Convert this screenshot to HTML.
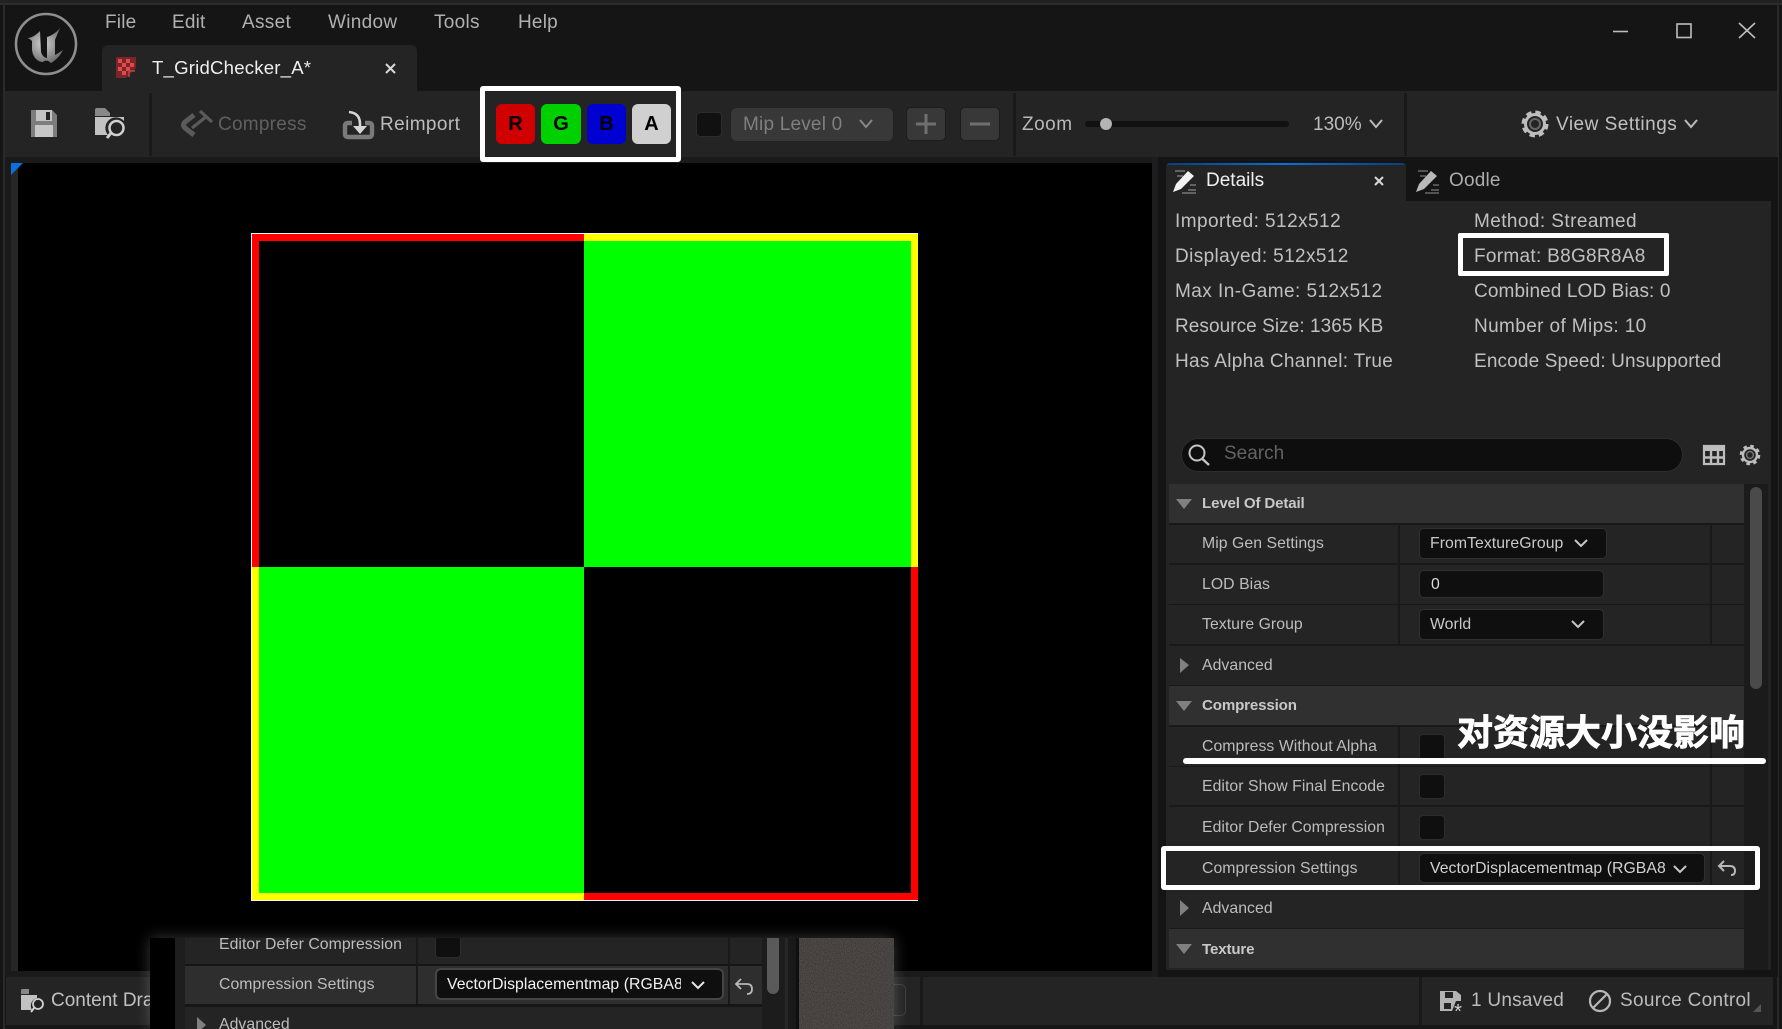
<!DOCTYPE html>
<html><head><meta charset="utf-8"><title>T_GridChecker_A</title>
<style>
html,body{margin:0;padding:0;width:1782px;height:1029px;overflow:hidden;background:#151515}
*{box-sizing:border-box}
body{position:relative;font-family:"Liberation Sans","Noto Sans CJK SC",sans-serif;}
.b{position:absolute}
.t{position:absolute;white-space:nowrap;height:24px;line-height:24px;font-size:19px;color:#c0c0c0;margin-top:1px}
.r{font-size:15.8px;color:#bdbdbd;letter-spacing:.05px}
.h{font-size:15.1px;color:#c8c8c8;font-weight:bold;letter-spacing:-.15px}
.ctl{position:absolute;background:#0f0f0f;border:1px solid #2f2f2f;border-radius:5px}
.cb{position:absolute;width:26px;background:#0f0f0f;border:1px solid #2c2c2c;border-radius:4px}
.sep{position:absolute;background:#191919}
svg{position:absolute;overflow:visible}
.ck{position:absolute;text-align:center;color:#000;font-weight:bold;font-size:20px;line-height:40px;height:40px;border-radius:6px;top:104px}
</style></head><body>

<!-- window frame -->
<div class="b" style="left:0;top:0;width:1782px;height:4px;background:#222"></div>
<div class="b" style="left:0;top:3px;width:1782px;height:2px;background:#2c2c2c"></div>
<div class="b" style="left:3px;top:4px;width:2px;height:1025px;background:#2a2a2a"></div>
<div class="b" style="left:1777px;top:4px;width:2px;height:1025px;background:#2a2a2a"></div>

<!-- logo -->
<svg style="left:0;top:0" width="100" height="90">
<defs>
<radialGradient id="lg" cx=".45" cy=".45" r=".6"><stop offset="0" stop-color="#d0d0d0"/><stop offset="1" stop-color="#6a6a6a"/></radialGradient>
<filter id="sf" x="-10%" y="-10%" width="120%" height="120%"><feGaussianBlur stdDeviation=".35"/></filter>
</defs>
<circle cx="46" cy="44" r="30" fill="#141414" stroke="#8e8e8e" stroke-width="2.6"/>
<path filter="url(#sf)" d="M27 38C32 38 36 35 40 31L41 52C42 56 45 58 47 58L47 37C51 36 56 33 60 28C58 33 56 37 55 40L55 55C57 54 60 52 63 50C60 56 56 60 51 63C48 60 45 60 43 62C38 62 33 58 32 50L32 41C30 39 28 38 27 38Z" fill="url(#lg)"/>
</svg>

<!-- menu -->
<div class="t" style="left:105px;top:10px;color:#b0b0b0;letter-spacing:.2px">File</div>
<div class="t" style="left:172px;top:10px;color:#b0b0b0;letter-spacing:.2px">Edit</div>
<div class="t" style="left:242px;top:10px;color:#b0b0b0;letter-spacing:.3px">Asset</div>
<div class="t" style="left:328px;top:10px;color:#b0b0b0;letter-spacing:.3px">Window</div>
<div class="t" style="left:434px;top:10px;color:#b0b0b0;letter-spacing:.3px">Tools</div>
<div class="t" style="left:518px;top:10px;color:#b0b0b0;letter-spacing:.2px">Help</div>

<!-- window controls -->
<svg style="left:0;top:0" width="1782" height="60" fill="none" stroke="#bdbdbd" stroke-width="1.6">
<path d="M1613 31.5H1628"/><rect x="1677" y="24" width="14" height="13.5"/><path d="M1739 23L1755 38M1755 23L1739 38"/>
</svg>

<!-- doc tab -->
<div class="b" style="left:102px;top:45px;width:315px;height:46px;background:#242424;border-radius:6px 6px 0 0"></div>
<svg style="left:116px;top:57px" width="20" height="21">
<rect x="0" y="0" width="20" height="21" fill="#7a2628"/>
<path d="M2 2h4v4H2zM10 2h4v4h-4zM6 6h4v4H6zM14 6h4v4h-4zM2 10h4v4H2zM10 10h4v4h-4zM6 14h4v4H6z" fill="#e04a4a"/>
<path d="M20 11V21H10Z" fill="#242424"/><path d="M13 20V14H19" stroke="#c04040" stroke-width="1.6" fill="none"/>
</svg>
<div class="t" style="left:152px;top:55px;color:#eee;font-size:18.6px;letter-spacing:.2px">T_GridChecker_A*</div>
<svg style="left:385px;top:63px" width="11" height="11"><path d="M1 1L10 10M10 1L1 10" stroke="#d8d8d8" stroke-width="2"/></svg>

<!-- toolbar -->
<div class="b" style="left:5px;top:91px;width:1772px;height:66px;background:#242424"></div>
<div class="sep" style="left:149px;top:93px;width:3px;height:63px"></div>
<div class="sep" style="left:1013px;top:93px;width:3px;height:63px"></div>
<div class="sep" style="left:1404px;top:93px;width:3px;height:63px"></div>

<svg style="left:0;top:0" width="500" height="160">
<path d="M31 110H52L57 115V137H31Z" fill="#7d7d7d"/>
<rect x="36" y="110" width="16" height="11" fill="#c2c2c2"/><rect x="46" y="112" width="4" height="8" fill="#222"/>
<rect x="35" y="125" width="18" height="12" fill="#c6c6c6"/>
<path d="M95 116V110Q95 108 97 108H105L110 113V116Z" fill="#888"/>
<path d="M95 117H124V121A10 10 0 0 0 108 135H95Z" fill="#c2c2c2"/>
<circle cx="116.5" cy="128" r="7" fill="none" stroke="#d0d0d0" stroke-width="2.5"/>
<path d="M111 133L107 138" stroke="#d0d0d0" stroke-width="3"/>
<path d="M194 115L185 122Q182 125 185 128L194 135" fill="none" stroke="#5a5a5a" stroke-width="5"/>
<path d="M192 128L207 116M200 111L212 122" stroke="#5a5a5a" stroke-width="3.2" fill="none"/>
<path d="M352 123H348Q345 123 345 126V134Q345 137 348 137H369Q372 137 372 134V126Q372 123 369 123H365" fill="none" stroke="#7a7a7a" stroke-width="4.4"/>
<path d="M349 112Q360 113 360 124V130" fill="none" stroke="#d6d6d6" stroke-width="2.6"/>
<path d="M353 126H367L360 134Z" fill="#d6d6d6"/>
</svg>
<div class="t" style="left:218px;top:112px;color:#606060;letter-spacing:.25px">Compress</div>
<div class="t" style="left:380px;top:112px;color:#bcbcbc;letter-spacing:.4px">Reimport</div>

<!-- RGBA -->
<div class="ck" style="left:496px;width:39px;background:#d00000">R</div>
<div class="ck" style="left:541px;width:40px;background:#00d000">G</div>
<div class="ck" style="left:587px;width:39px;background:#0000d0">B</div>
<div class="ck" style="left:632px;width:39px;background:#d0d0d0">A</div>

<div class="cb" style="left:696px;top:112px;height:25px;background:#111"></div>
<div class="b" style="left:731px;top:108px;width:162px;height:33px;background:#383838;border-radius:6px"></div>
<div class="t" style="left:743px;top:112px;color:#7f7f7f;letter-spacing:.2px">Mip Level 0</div>
<svg style="left:0;top:0" width="1782" height="160" fill="none">
<path d="M860 120L866 127L872 120" stroke="#888" stroke-width="2"/>
<path d="M1370 120L1376 127L1382 120" stroke="#bbb" stroke-width="2"/>
<path d="M1685 120L1691 127L1697 120" stroke="#bbb" stroke-width="2"/>
</svg>
<div class="b" style="left:906px;top:107px;width:40px;height:34px;background:#383838;border:1px solid #1c1c1c;border-radius:5px"></div>
<div class="b" style="left:960px;top:107px;width:40px;height:34px;background:#383838;border:1px solid #1c1c1c;border-radius:5px"></div>
<svg style="left:0;top:0" width="1100" height="160"><path d="M916 124H936M926 114V134M970 124H990" stroke="#707070" stroke-width="3"/></svg>
<div class="t" style="left:1022px;top:112px;color:#b8b8b8;letter-spacing:.5px">Zoom</div>
<div class="b" style="left:1085px;top:121px;width:204px;height:6px;background:#111;border-radius:3px"></div>
<div class="b" style="left:1100px;top:118px;width:12px;height:12px;background:#b4b4b4;border-radius:50%"></div>
<div class="t" style="left:1313px;top:112px;color:#bcbcbc">130%</div>
<svg style="left:1521px;top:110px" width="28" height="28" fill="none">
<circle cx="14" cy="14" r="11" stroke="#bdbdbd" stroke-width="5" stroke-dasharray="5 3.64" />
<circle cx="14" cy="14" r="9.5" stroke="#bdbdbd" stroke-width="3"/>
<circle cx="14" cy="14" r="5" stroke="#666" stroke-width="2"/>
</svg>
<div class="t" style="left:1556px;top:112px;color:#c0c0c0;letter-spacing:.5px">View Settings</div>

<!-- viewport -->
<div class="b" style="left:5px;top:157px;width:1147px;height:820px;background:#1a1a1a"></div>
<div class="b" style="left:11px;top:163px;width:7px;height:808px;background:#262626"></div>
<div class="b" style="left:18px;top:163px;width:1134px;height:808px;background:#000"></div>
<svg style="left:11px;top:163px" width="12" height="12"><path d="M0 0H12L0 12Z" fill="#0a70dc"/></svg>

<!-- checker -->
<div class="b" style="left:251px;top:233px;width:667px;height:668px;background:#f4f4f4"></div>
<div class="b" style="left:252px;top:234px;width:332px;height:333px;background:#000;border-left:7px solid #f00;border-top:7px solid #f00"></div>
<div class="b" style="left:584px;top:234px;width:334px;height:333px;background:#0f0;border-right:7px solid #ff0;border-top:7px solid #ff0"></div>
<div class="b" style="left:252px;top:567px;width:332px;height:333px;background:#0f0;border-left:7px solid #ff0;border-bottom:7px solid #ff0"></div>
<div class="b" style="left:584px;top:567px;width:334px;height:333px;background:#000;border-right:7px solid #f00;border-bottom:7px solid #f00"></div>

<!-- right panel -->
<div class="b" style="left:1152px;top:157px;width:6px;height:820px;background:#1d1d1d"></div>
<div class="b" style="left:1158px;top:157px;width:620px;height:820px;background:#141414"></div>
<div class="b" style="left:1166px;top:201px;width:605px;height:769px;background:#242424"></div>
<div class="b" style="left:1166px;top:163px;width:240px;height:38px;background:#242424;border-radius:4px 4px 0 0;overflow:hidden"><div style="height:2px;background:linear-gradient(90deg,#0a3f78,#0a70dc 50%,#0a3f78)"></div></div>
<svg style="left:0;top:0" width="1782" height="200" fill="none">
<path d="M1175 171H1185M1177 176H1183M1188 190H1196M1182 193H1196M1190 185H1196" stroke="#777" stroke-width="1.4"/>
<path d="M1173 192L1176 184L1188 171L1194 176L1181 189Z" fill="#f2f2f2"/>
<path d="M1418 171H1428M1420 176H1426M1431 190H1439M1425 193H1439M1433 185H1439" stroke="#666" stroke-width="1.4"/>
<path d="M1416 192L1419 184L1431 171L1437 176L1424 189Z" fill="#b8b8b8"/>
<path d="M1375 177L1383 185M1383 177L1375 185" stroke="#d8d8d8" stroke-width="2"/>
</svg>
<div class="t" style="left:1206px;top:168px;color:#f0f0f0">Details</div>
<div class="t" style="left:1449px;top:168px;color:#adadad;letter-spacing:.2px">Oodle</div>

<div class="t" style="left:1175px;top:209px;letter-spacing:.45px">Imported: 512x512</div>
<div class="t" style="left:1175px;top:244px;letter-spacing:.38px">Displayed: 512x512</div>
<div class="t" style="left:1175px;top:279px;letter-spacing:.45px">Max In-Game: 512x512</div>
<div class="t" style="left:1175px;top:314px;letter-spacing:.06px">Resource Size: 1365 KB</div>
<div class="t" style="left:1175px;top:349px;letter-spacing:.3px">Has Alpha Channel: True</div>
<div class="t" style="left:1474px;top:209px;letter-spacing:.42px">Method: Streamed</div>
<div class="t" style="left:1474px;top:244px;letter-spacing:.3px">Format: B8G8R8A8</div>
<div class="t" style="left:1474px;top:279px;letter-spacing:.11px">Combined LOD Bias: 0</div>
<div class="t" style="left:1474px;top:314px;letter-spacing:.38px">Number of Mips: 10</div>
<div class="t" style="left:1474px;top:349px;letter-spacing:.14px">Encode Speed: Unsupported</div>
<div class="b" style="left:1458px;top:233px;width:211px;height:43px;border:5px solid #fff;border-radius:2px"></div>

<!-- search -->
<div class="b" style="left:1181px;top:438px;width:502px;height:34px;background:#0e0e0e;border:1px solid #2d2d2d;border-radius:17px"></div>
<svg style="left:0;top:0" width="1782" height="480" fill="none">
<circle cx="1197" cy="453" r="7.5" stroke="#c4c4c4" stroke-width="2"/><path d="M1202.5 459L1209 465" stroke="#c4c4c4" stroke-width="2.4"/>
<rect x="1704" y="446" width="20" height="18" stroke="#bdbdbd" stroke-width="2.2"/>
<rect x="1704" y="446" width="20" height="5" fill="#bdbdbd"/>
<path d="M1704 457.5H1724M1711 451V464M1718 451V464" stroke="#bdbdbd" stroke-width="2.4"/>
<circle cx="1750" cy="455" r="8.5" stroke="#bdbdbd" stroke-width="3.6" stroke-dasharray="3.4 3.27"/>
<circle cx="1750" cy="455" r="7" stroke="#bdbdbd" stroke-width="2.4"/>
<circle cx="1750" cy="455" r="3.4" stroke="#777" stroke-width="1.4"/>
</svg>
<div class="t" style="left:1224px;top:441px;color:#626262">Search</div>

<!-- property list -->
<div class="b" style="left:1169px;top:484px;width:575px;height:484px;background:#191919"></div>
<div class="b" style="left:1744px;top:484px;width:24px;height:486px;background:#1b1b1b"></div>
<div class="b" style="left:1750px;top:487px;width:12px;height:202px;background:#4a4a4a;border-radius:6px"></div>

<!-- rows backgrounds -->
<div class="b" style="left:1169px;top:484px;width:575px;height:39px;background:#303030"></div>
<div class="b" style="left:1169px;top:525px;width:229px;height:38px;background:#242424"></div><div class="b" style="left:1400px;top:525px;width:310px;height:38px;background:#242424"></div><div class="b" style="left:1712px;top:525px;width:32px;height:38px;background:#242424"></div>
<div class="b" style="left:1169px;top:565px;width:229px;height:39px;background:#242424"></div><div class="b" style="left:1400px;top:565px;width:310px;height:39px;background:#242424"></div><div class="b" style="left:1712px;top:565px;width:32px;height:39px;background:#242424"></div>
<div class="b" style="left:1169px;top:605px;width:229px;height:39px;background:#242424"></div><div class="b" style="left:1400px;top:605px;width:310px;height:39px;background:#242424"></div><div class="b" style="left:1712px;top:605px;width:32px;height:39px;background:#242424"></div>
<div class="b" style="left:1169px;top:646px;width:575px;height:39px;background:#242424"></div>
<div class="b" style="left:1169px;top:686px;width:575px;height:39px;background:#303030"></div>
<div class="b" style="left:1169px;top:727px;width:229px;height:39px;background:#242424"></div><div class="b" style="left:1400px;top:727px;width:310px;height:39px;background:#242424"></div><div class="b" style="left:1712px;top:727px;width:32px;height:39px;background:#242424"></div>
<div class="b" style="left:1169px;top:767px;width:229px;height:38px;background:#242424"></div><div class="b" style="left:1400px;top:767px;width:310px;height:38px;background:#242424"></div><div class="b" style="left:1712px;top:767px;width:32px;height:38px;background:#242424"></div>
<div class="b" style="left:1169px;top:807px;width:229px;height:39px;background:#242424"></div><div class="b" style="left:1400px;top:807px;width:310px;height:39px;background:#242424"></div><div class="b" style="left:1712px;top:807px;width:32px;height:39px;background:#242424"></div>
<div class="b" style="left:1169px;top:848px;width:229px;height:39px;background:#242424"></div><div class="b" style="left:1400px;top:848px;width:310px;height:39px;background:#242424"></div><div class="b" style="left:1712px;top:848px;width:32px;height:39px;background:#242424"></div>
<div class="b" style="left:1169px;top:889px;width:575px;height:39px;background:#242424"></div>
<div class="b" style="left:1169px;top:929px;width:575px;height:39px;background:#303030"></div>

<!-- triangles -->
<svg style="left:0;top:0" width="1782" height="1029" fill="#808080">
<path d="M1176 499H1192L1184 509Z"/><path d="M1176 701H1192L1184 711Z"/><path d="M1176 944H1192L1184 954Z"/>
<path d="M1180 658L1189 665L1180 673Z"/><path d="M1180 900L1189 908L1180 916Z"/>
</svg>

<div class="t h" style="left:1202px;top:491px">Level Of Detail</div>
<div class="t r" style="left:1202px;top:531px">Mip Gen Settings</div>
<div class="t r" style="left:1202px;top:572px">LOD Bias</div>
<div class="t r" style="left:1202px;top:612px">Texture Group</div>
<div class="t r" style="left:1202px;top:653px">Advanced</div>
<div class="t h" style="left:1202px;top:693px">Compression</div>
<div class="t r" style="left:1202px;top:734px">Compress Without Alpha</div>
<div class="t r" style="left:1202px;top:774px">Editor Show Final Encode</div>
<div class="t r" style="left:1202px;top:815px">Editor Defer Compression</div>
<div class="t r" style="left:1202px;top:856px">Compression Settings</div>
<div class="t r" style="left:1202px;top:896px">Advanced</div>
<div class="t h" style="left:1202px;top:937px">Texture</div>

<div class="ctl" style="left:1419px;top:528px;width:188px;height:31px"></div>
<div class="t r" style="left:1430px;top:531px;color:#c8c8c8">FromTextureGroup</div>
<div class="ctl" style="left:1419px;top:570px;width:185px;height:28px"></div>
<div class="t r" style="left:1431px;top:572px;color:#dedede">0</div>
<div class="ctl" style="left:1419px;top:609px;width:185px;height:31px"></div>
<div class="t r" style="left:1430px;top:612px;color:#c8c8c8">World</div>
<div class="cb" style="left:1419px;top:734px;height:28px"></div>
<div class="cb" style="left:1419px;top:774px;height:25px"></div>
<div class="cb" style="left:1419px;top:815px;height:25px"></div>
<div class="ctl" style="left:1419px;top:853px;width:286px;height:30px"></div>
<div class="t r" style="left:1430px;top:856px;width:235px;overflow:hidden;color:#d2d2d2">VectorDisplacementmap (RGBA8)</div>
<svg style="left:0;top:0" width="1782" height="1029" fill="none">
<path d="M1575 540L1581 546L1587 540M1572 621L1578 627L1584 621M1674 866L1680 872L1686 866" stroke="#c8c8c8" stroke-width="2"/>
<path d="M1724 861L1719 866L1724 871M1719 866H1730Q1735 866 1735 871Q1735 875 1731 875" stroke="#b8b8b8" stroke-width="2"/>
</svg>
<div class="b" style="left:1161px;top:846px;width:599px;height:44px;border:5px solid #fff;border-radius:3px"></div>
<div class="b" style="left:1183px;top:758px;width:583px;height:6px;background:#fff;border-radius:3px"></div>
<div class="t" style="left:1457px;top:711px;height:42px;line-height:42px;font-size:36px;font-weight:bold;color:#fff;-webkit-text-stroke:.7px #fff;font-family:'Liberation Sans','Noto Sans CJK SC',sans-serif">对资源大小没影响</div>

<!-- status bar -->
<div class="b" style="left:6px;top:977px;width:1767px;height:48px;background:#242424"></div>
<div class="b" style="left:5px;top:1025px;width:1772px;height:4px;background:#161616"></div>
<div class="sep" style="left:920px;top:977px;width:3px;height:48px"></div>
<div class="sep" style="left:1419px;top:977px;width:3px;height:48px"></div>
<div class="b" style="left:880px;top:984px;width:26px;height:32px;border:1.5px solid #3c3c3c;border-radius:5px"></div>
<svg style="left:0;top:0" width="1782" height="1029" fill="none">
<path d="M21 994V990Q21 989 23 989H29V994Z" fill="#888"/><path d="M21 995H37V998A8 8 0 0 0 32 1010H21Z" fill="#c2c2c2"/>
<circle cx="38" cy="1004" r="5" stroke="#d0d0d0" stroke-width="1.8"/><path d="M34 1008L31 1012" stroke="#d0d0d0" stroke-width="2"/>
<path d="M1440 991H1456L1461 995V1001H1456L1452 1011H1440Z" fill="#b4b4b4"/><rect x="1445" y="992" width="8" height="6" fill="#242424"/><rect x="1444" y="1003" width="7" height="6" fill="#242424"/>
<text x="1458" y="1018" font-family="Liberation Sans" font-size="20" fill="#d2d2d2" text-anchor="middle">*</text>
<circle cx="1600" cy="1001" r="10" stroke="#b8b8b8" stroke-width="2.2"/><path d="M1593 1008L1607 994" stroke="#b8b8b8" stroke-width="2.2"/>
<path d="M1761 1004V1012H1753Z" fill="#555"/>
</svg>
<div class="t" style="left:51px;top:988px;color:#c0c0c0">Content Drawer</div>
<div class="t" style="left:1471px;top:988px;color:#bcbcbc;letter-spacing:.25px">1 Unsaved</div>
<div class="t" style="left:1620px;top:988px;color:#bcbcbc;letter-spacing:.3px">Source Control</div>

<!-- pasted overlay -->
<div class="b" style="left:150px;top:938px;width:744px;height:91px;background:#242424;overflow:hidden;box-shadow:0 0 14px rgba(255,255,255,.22)">
  <div class="b" style="left:0;top:0;width:25px;height:91px;background:#000"></div>
  <div class="b" style="left:25px;top:0;width:10px;height:91px;background:#1e1e1e"></div>
  <div class="b" style="left:35px;top:0;width:577px;height:26px;background:#242424"></div>
  <div class="b" style="left:35px;top:26px;width:577px;height:2px;background:#161616"></div>
  <div class="b" style="left:35px;top:28px;width:577px;height:38px;background:#2e2e2e"></div>
  <div class="b" style="left:35px;top:66px;width:577px;height:3px;background:#161616"></div>
  <div class="b" style="left:266px;top:0;width:2px;height:66px;background:#191919"></div>
  <div class="b" style="left:578px;top:0;width:2px;height:66px;background:#191919"></div>
  <div class="b" style="left:612px;top:0;width:23px;height:91px;background:#1c1c1c"></div>
  <div class="b" style="left:617px;top:0;width:12px;height:56px;background:#5a5a5a;border-radius:0 0 6px 6px"></div>
  <div class="b" style="left:635px;top:0;width:3px;height:91px;background:#262626"></div>
  <div class="b" style="left:638px;top:0;width:8px;height:91px;background:#191919"></div>
  <div class="b" style="left:646px;top:0;width:3px;height:91px;background:#0f0f0f"></div>
  <svg class="b" style="left:649px;top:0;overflow:hidden" width="95" height="91"><filter id="nz" x="0" y="0" width="100%" height="100%" color-interpolation-filters="sRGB"><feTurbulence type="fractalNoise" baseFrequency="0.9" numOctaves="2"/><feColorMatrix values="0 0 0 0 .2  0 0 0 0 .18  0 0 0 0 .17  0 0 0 1.6 -.5"/></filter><rect width="95" height="91" fill="#524d4a"/><rect width="95" height="91" filter="url(#nz)"/></svg>
  <div class="t r" style="left:69px;top:-6px">Editor Defer Compression</div>
  <div class="t r" style="left:69px;top:34px">Compression Settings</div>
  <div class="t r" style="left:69px;top:74px">Advanced</div>
  <div class="cb" style="left:285px;top:-4px;height:24px"></div>
  <div class="ctl" style="left:285px;top:30px;width:289px;height:32px;border:2px solid #454545;border-radius:6px"></div>
  <div class="t r" style="left:297px;top:34px;width:234px;overflow:hidden;color:#f2f2f2">VectorDisplacementmap (RGBA8)</div>
  <svg style="left:0;top:0" width="744" height="91" fill="none">
    <path d="M542 44L548 50L554 44" stroke="#e6e6e6" stroke-width="2"/>
    <path d="M591 41L586 46L591 51M586 46H597Q602 46 602 51Q602 56 597 56" stroke="#b8b8b8" stroke-width="1.8"/>
    <path d="M47 79L56 87L47 95Z" fill="#808080"/>
  </svg>
</div>

<!-- RGBA highlight box on top -->
<div class="b" style="left:480px;top:86px;width:201px;height:76px;border:5px solid #fff;border-radius:3px"></div>
</body></html>
